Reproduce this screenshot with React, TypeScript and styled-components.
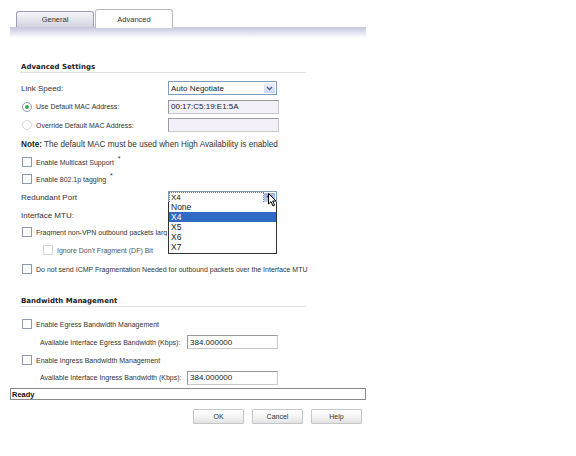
import * as React from 'react';
import styled, { createGlobalStyle } from 'styled-components';

const GlobalStyle = createGlobalStyle`
  html, body {
    margin: 0;
    padding: 0;
    background: #ffffff;
  }
  body {
    font-family: "Liberation Sans", Arial, sans-serif;
    color: #222;
  }
`;

const Page = styled.div`
  width: 576px;
  height: 456px;
  position: relative;
  overflow: hidden;
`;

const Panel = styled.div`
  width: 356px;
  margin-left: 10px;
`;

const TabRow = styled.div`
  display: flex;
  align-items: flex-end;
  height: 27px;
  padding-left: 6px;
  gap: 1px;
`;

const Tab = styled.div<{ active?: boolean }>`
  width: 76px;
  height: ${({ active }) => (active ? '18px' : '15px')};
  margin-bottom: ${({ active }) => (active ? '-1px' : '0')};
  border: 1px solid ${({ active }) => (active ? '#b8b8c8' : '#9c9cb0')};
  border-bottom: none;
  border-radius: 3px 3px 0 0;
  background: ${({ active }) =>
    active ? '#ffffff' : 'linear-gradient(#f6f6fa, #d4d4e2)'};
  font-size: 7.5px;
  color: #333;
  display: flex;
  align-items: center;
  justify-content: center;
  position: relative;
  z-index: 1;
`;

const Band = styled.div`
  height: 11px;
  background: linear-gradient(#c6c6de, #ececf6 70%, #ffffff);
`;

const Content = styled.div`
  padding: 23px 0 0 11px;
  position: relative;
`;

const SectionTitle = styled.div`
  font-family: "DejaVu Sans", Verdana, sans-serif;
  font-size: 7px;
  font-weight: bold;
  color: #222;
  height: 9px;
  line-height: 9px;
  padding-top: 2px;
  width: 285px;
  border-bottom: 1px solid #e2e2e2;
  margin-left: -1px;
  padding-left: 1px;
`;

const Spacer = styled.div<{ h: number }>`
  height: ${({ h }) => h}px;
`;

const Row = styled.div<{ h: number; indent?: number }>`
  height: ${({ h }) => h}px;
  display: flex;
  align-items: center;
  padding-left: ${({ indent }) => indent || 0}px;
`;

const Label = styled.div<{ w?: number; size?: number; dim?: boolean; clip?: boolean }>`
  width: ${({ w }) => (w ? `${w}px` : 'auto')};
  font-size: ${({ size }) => size || 7}px;
  white-space: nowrap;
  flex-shrink: 0;
  overflow: ${({ clip }) => (clip ? 'hidden' : 'visible')};
  color: ${({ dim }) => (dim ? '#555' : '#333')};
`;

const RadioLabel = styled.div`
  width: 146px;
  padding-left: 1px;
  display: flex;
  align-items: center;
  font-size: 7px;
  color: #333;
  white-space: nowrap;
`;

const Select = styled.div`
  width: 107px;
  height: 12px;
  border: 1px solid #7f9db9;
  display: flex;
  align-items: center;
  font-size: 8px;
  background: #fff;
  color: #222;
`;

const SelectText = styled.div<{ focused?: boolean }>`
  flex: 1;
  height: 100%;
  display: flex;
  align-items: center;
  padding-left: 2px;
  box-sizing: border-box;
  outline: ${({ focused }) => (focused ? '1px dotted #777' : 'none')};
  outline-offset: -1px;
`;

const ArrowBtn = styled.div<{ pressed?: boolean }>`
  width: 11px;
  height: 10px;
  margin-right: 1px;
  border-radius: 1px;
  background: ${({ pressed }) =>
    pressed ? 'linear-gradient(#9fb3d9, #c6d3ee)' : 'linear-gradient(#eef2fd, #c9d5f3)'};
  display: flex;
  align-items: center;
  justify-content: center;
`;

const TextBox = styled.div<{ tint?: boolean; w?: number }>`
  width: ${({ w }) => w || 107}px;
  height: 12px;
  border: 1px solid #c8c8c8;
  border-top-color: #9a9a9a;
  border-left-color: #9a9a9a;
  background: ${({ tint }) => (tint ? '#f4f0fa' : '#ffffff')};
  font-size: 8px;
  display: flex;
  align-items: center;
  padding-left: 2px;
  color: #222;
`;

const Check = styled.span<{ faded?: boolean }>`
  width: 8px;
  height: 8px;
  border: 1px solid ${({ faded }) => (faded ? '#d6d6d6' : '#8a9bb4')};
  background: #fff;
  margin-right: 4px;
  flex-shrink: 0;
`;

const Radio = styled.span<{ checked?: boolean; faded?: boolean }>`
  width: 8px;
  height: 8px;
  border-radius: 50%;
  border: 1px solid ${({ faded }) => (faded ? '#d8d8d8' : '#8a9bb4')};
  background: #fff;
  margin-right: 4px;
  flex-shrink: 0;
  display: flex;
  align-items: center;
  justify-content: center;
  &::after {
    content: '';
    width: 4px;
    height: 4px;
    border-radius: 50%;
    background: ${({ checked }) => (checked ? '#3aa84a' : 'transparent')};
  }
`;

const Mark = styled.span`
  font-size: 7px;
  vertical-align: super;
  margin-left: 2px;
  line-height: 0;
`;

const Note = styled.div`
  font-size: 8.2px;
  color: #333;
  white-space: nowrap;
  b {
    font-weight: bold;
    color: #222;
  }
`;

const DropList = styled.div`
  position: absolute;
  left: 158px;
  top: 164px;
  width: 107px;
  border: 1px solid #333;
  border-top: none;
  background: #fff;
  font-size: 8.5px;
  padding-bottom: 1px;
  z-index: 5;
`;

const Option = styled.div<{ selected?: boolean }>`
  height: 10px;
  line-height: 10px;
  padding-left: 2px;
  color: ${({ selected }) => (selected ? '#fff' : '#222')};
  background: ${({ selected }) => (selected ? '#316ac5' : 'transparent')};
`;

const Cursor = styled.svg`
  position: absolute;
  left: 268px;
  top: 193px;
  z-index: 6;
`;

const StatusBar = styled.div`
  height: 10px;
  border: 1px solid #8a8a8a;
  font-size: 7.5px;
  font-weight: bold;
  display: flex;
  align-items: center;
  padding-left: 1px;
  margin-top: 2px;
  color: #111;
`;

const Buttons = styled.div`
  display: flex;
  justify-content: flex-end;
  gap: 8px;
  padding: 9px 4px 0 0;
`;

const Button = styled.div`
  width: 49px;
  height: 13px;
  border: 1px solid #c6c6c6;
  border-radius: 1px;
  background: linear-gradient(#ffffff, #f2f2f2 60%, #e2e2e2);
  font-size: 7px;
  color: #333;
  display: flex;
  align-items: center;
  justify-content: center;
`;

const Chevron: React.FC<{ color?: string }> = ({ color = '#4d6185' }) => (
  <svg width="7" height="5" viewBox="0 0 7 5">
    <path d="M1 1 L3.5 3.5 L6 1" stroke={color} strokeWidth="1.3" fill="none" />
  </svg>
);

export default function App() {
  return (
    <Page>
      <GlobalStyle />
      <Panel>
        <TabRow>
          <Tab>General</Tab>
          <Tab active>Advanced</Tab>
        </TabRow>
        <Band />
        <Content>
          <SectionTitle>Advanced Settings</SectionTitle>
          <Spacer h={6} />
          <Row h={18}>
            <Label w={147} size={8}>Link Speed:</Label>
            <Select>
              <SelectText>Auto Negotiate</SelectText>
              <ArrowBtn>
                <Chevron />
              </ArrowBtn>
            </Select>
          </Row>
          <Row h={19}>
            <RadioLabel>
              <Radio checked />
              Use Default MAC Address:
            </RadioLabel>
            <TextBox tint>00:17:C5:19:E1:5A</TextBox>
          </Row>
          <Row h={18}>
            <RadioLabel>
              <Radio faded />
              Override Default MAC Address:
            </RadioLabel>
            <TextBox tint />
          </Row>
          <Row h={20}>
            <Note>
              <b>Note:</b> The default MAC must be used when High Availability is enabled
            </Note>
          </Row>
          <Row h={16} indent={1}>
            <Check />
            <Label>
              Enable Multicast Support <Mark>*</Mark>
            </Label>
          </Row>
          <Row h={18} indent={1}>
            <Check />
            <Label>
              Enable 802.1p tagging <Mark>*</Mark>
            </Label>
          </Row>
          <Row h={19}>
            <Label w={147} size={8}>Redundant Port</Label>
            <Select>
              <SelectText focused>X4</SelectText>
              <ArrowBtn pressed>
                <Chevron color="#2c3f66" />
              </ArrowBtn>
            </Select>
          </Row>
          <Row h={16}>
            <Label w={147} size={8}>Interface MTU:</Label>
          </Row>
          <Row h={18} indent={1}>
            <Check />
            <Label w={131} clip>Fragment non-VPN outbound packets larger than this Interface's MTU</Label>
          </Row>
          <Row h={18} indent={22}>
            <Check faded />
            <Label dim>Ignore Don't Fragment (DF) Bit</Label>
          </Row>
          <Row h={20} indent={1}>
            <Check />
            <Label>Do not send ICMP Fragmentation Needed for outbound packets over the Interface MTU</Label>
          </Row>
          <Spacer h={16} />
          <SectionTitle>Bandwidth Management</SectionTitle>
          <Spacer h={8} />
          <Row h={18} indent={1}>
            <Check />
            <Label>Enable Egress Bandwidth Management</Label>
          </Row>
          <Row h={18} indent={19}>
            <Label w={147}>Available Interface Egress Bandwidth (Kbps):</Label>
            <TextBox w={87}>384.000000</TextBox>
          </Row>
          <Row h={18} indent={1}>
            <Check />
            <Label>Enable Ingress Bandwidth Management</Label>
          </Row>
          <Row h={17} indent={19}>
            <Label w={147}>Available Interface Ingress Bandwidth (Kbps):</Label>
            <TextBox w={87}>384.000000</TextBox>
          </Row>
          <DropList>
            <Option>None</Option>
            <Option selected>X4</Option>
            <Option>X5</Option>
            <Option>X6</Option>
            <Option>X7</Option>
          </DropList>
        </Content>
        <StatusBar>Ready</StatusBar>
        <Buttons>
          <Button>OK</Button>
          <Button>Cancel</Button>
          <Button>Help</Button>
        </Buttons>
      </Panel>
      <Cursor width="10" height="15" viewBox="0 0 10 15">
        <path d="M0.5 0.5 L0.5 11 L3 8.6 L5 13 L6.6 12.3 L4.7 8 L8 8 Z" fill="#fff" stroke="#000" strokeWidth="1" />
      </Cursor>
    </Page>
  );
}
